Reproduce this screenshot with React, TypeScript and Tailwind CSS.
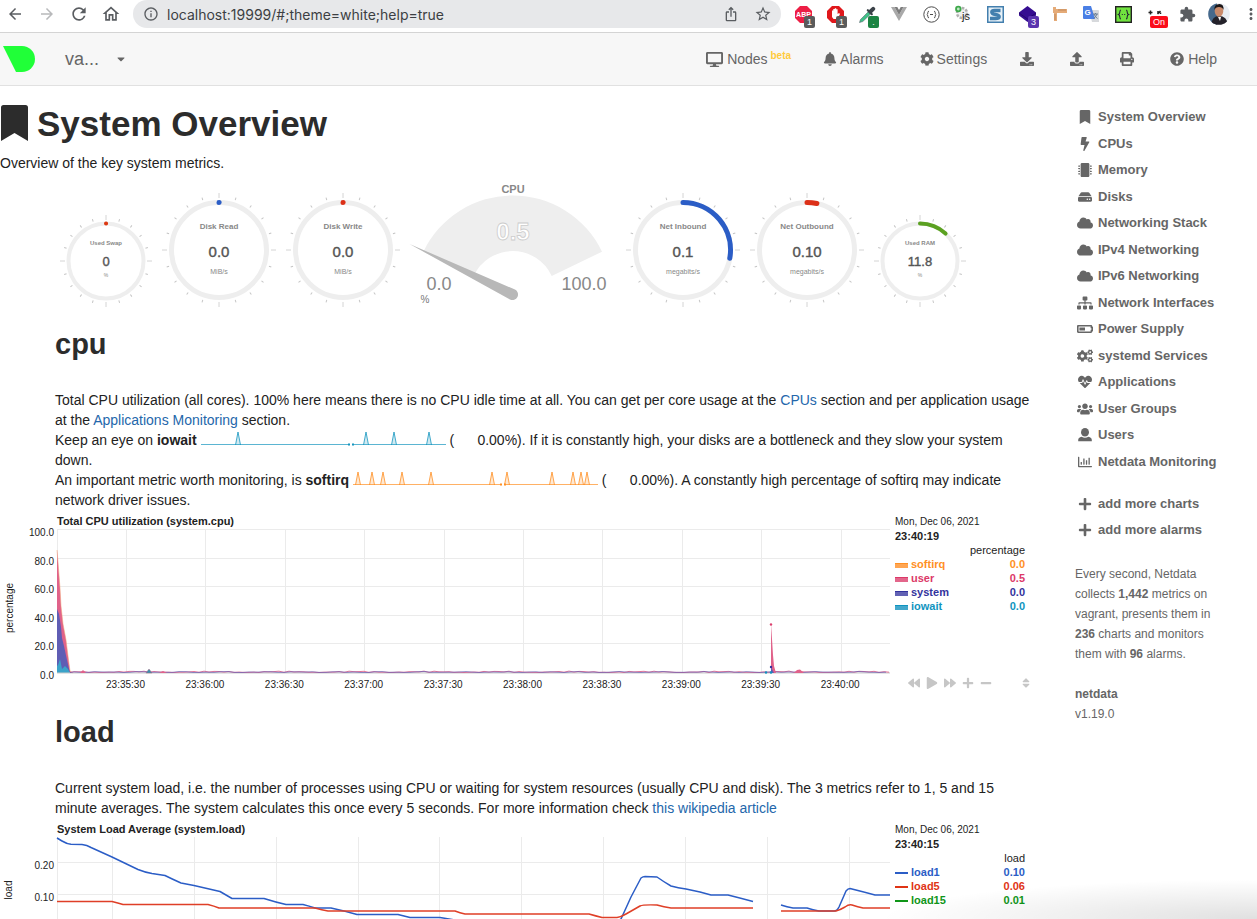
import React from "react";
import {
  FaBolt, FaMicrochip, FaHdd, FaCloud, FaSitemap, FaBatteryHalf, FaCogs, FaHeartbeat, FaUsers,
  FaRegChartBar, FaPlus, FaMinus, FaBookmark, FaDesktop, FaBell, FaCog, FaDownload, FaUpload, FaPrint,
  FaQuestionCircle, FaBackward, FaPlay, FaForward, FaSort, FaCaretDown,
} from "react-icons/fa";
import {
  MdArrowBack, MdArrowForward, MdRefresh, MdOutlineHome, MdInfoOutline, MdIosShare, MdStarOutline, MdMoreVert, MdExtension,
} from "react-icons/md";

function UserIcon() {
  return (
    <svg viewBox="0 0 14 14" width="14" height="14" fill="currentColor">
      <ellipse cx="7" cy="4.300" rx="4" ry="4.300" />
      <path d="M3.600 8.800Q7 10.800 10.400 8.800Q13.800 9.600 13.800 12V13.200H0.200V12Q0.200 9.600 3.600 8.800Z" />
    </svg>
  );
}

function Badge({ children, color }: { children: React.ReactNode; color: string }) {
  return (
    <span className={`absolute top-4 left-[17px] flex h-3 min-w-[11px] items-center justify-center rounded-xs px-px text-[9px] leading-3 text-white ${color}`}>
      {children}
    </span>
  );
}

function Ext({ label, children }: { label: string; children: React.ReactNode }) {
  return (
    <button aria-label={label} className="relative flex h-7 w-8 shrink-0 items-center justify-center">
      {children}
    </button>
  );
}

function BrowserBar() {
  return (
    <div className="flex h-[33px] shrink-0 items-start border-b border-[#d4d4d4] bg-white pl-[6px] text-[#5a5d61]">
      <div className="flex h-7 w-[127px] items-center gap-3.5 text-[18px]">
        <button aria-label="Back"><MdArrowBack /></button>
        <button aria-label="Forward" className="text-[#b8b9bb]"><MdArrowForward /></button>
        <button aria-label="Reload"><MdRefresh className="size-5 -m-px" /></button>
        <button aria-label="Home"><MdOutlineHome className="size-5 -m-px" /></button>
      </div>
      <div className="flex h-7 flex-1 items-center rounded-full bg-[#e7e8ea] pr-[9px] pl-[10px]">
        <MdInfoOutline className="size-4" />
        <input
          aria-label="Address"
          className="ml-2 min-w-0 flex-1 bg-transparent font-['Inter',sans-serif] text-[14px] text-[#3c3f43] outline-none"
          defaultValue="localhost:19999/#;theme=white;help=true"
        />
        <button aria-label="Share"><MdIosShare className="size-4" /></button>
        <button aria-label="Bookmark this page" className="ml-[15px]"><MdStarOutline className="size-[18px]" /></button>
      </div>
      <div className="ml-[6px] flex">
        <Ext label="Adblock Plus">
          <svg width="17" height="17" viewBox="0 0 17 17">
            <path d="M5 0H12L17 5V12L12 17H5L0 12V5Z" fill="#ed1e45" />
            <text x="8.500" y="11" fontSize="7" fontWeight="700" textAnchor="middle" fill="#fff">ABP</text>
          </svg>
          <Badge color="bg-[#5b5b5b]">1</Badge>
        </Ext>
        <Ext label="AdBlock">
          <svg width="17" height="17" viewBox="0 0 17 17">
            <path d="M5 0H12L17 5V12L12 17H5L0 12V5Z" fill="#e0181c" />
            <path d="M5 8V4.500H6.300V3H7.800V2.200H9.200V3.200H10.600V8L12 7L13 8L10.500 13H6.500L5 11Z" fill="#fff" />
          </svg>
          <Badge color="bg-[#5b5b5b]">1</Badge>
        </Ext>
        <Ext label="Color picker">
          <svg width="17" height="17" viewBox="0 0 17 17">
            <path d="M0.500 16.500L1.500 13.500L9.500 5.500L11.800 7.800L3.800 15.500Z" fill="#3fc187" stroke="#5b6670" strokeWidth="0.600" />
            <path d="M8.800 4.200L12.800 8.200" stroke="#3b4248" strokeWidth="2.200" strokeLinecap="round" />
            <path d="M11.500 5.500L14.200 2.800" stroke="#3b4248" strokeWidth="4" strokeLinecap="round" />
          </svg>
          <Badge color="bg-[#1c8443]">.</Badge>
        </Ext>
        <Ext label="Vue devtools">
          <svg width="16" height="14" viewBox="0 0 16 14">
            <path d="M0 0H3.500L8 8L12.500 0H16L8 14Z" fill="#a9a9a9" />
            <path d="M3.500 0H6.300L8 3L9.700 0H12.500L8 8Z" fill="#7d7d7d" />
          </svg>
        </Ext>
        <Ext label="JSON formatter">
          <svg width="17" height="17" viewBox="0 0 17 17" fill="none" stroke="#4c4c4c">
            <circle cx="8.500" cy="8.500" r="7.700" />
            <path d="M6 5.200Q4.800 5.200 4.800 6.700T4 8.500Q4.800 8.700 4.800 10.300T6 11.800M11 5.200Q12.200 5.200 12.200 6.700T13 8.500Q12.200 8.700 12.200 10.300T11 11.800M7 8.500H10" />
          </svg>
        </Ext>
        <Ext label="JS toggle">
          <svg width="18" height="19" viewBox="0 0 18 19">
            <circle cx="8" cy="8" r="5" fill="#f1f1f1" stroke="#b0b0b0" strokeWidth="2.500" strokeDasharray="2.500 1.300" />
            <circle cx="4.300" cy="4" r="3.200" fill="#3ea84b" />
            <circle cx="4.300" cy="4" r="1.400" fill="#bfe8c3" />
            <text x="8" y="15" fontSize="11" fill="#222">js</text>
          </svg>
        </Ext>
        <Ext label="Stylus">
          <svg width="17" height="17" viewBox="0 0 17 17">
            <rect x="0.750" y="0.750" width="15.500" height="15.500" fill="#e7f1f7" stroke="#437fae" strokeWidth="1.500" />
            <path d="M13.500 4.500H7.500Q4.500 4.500 4.800 6.300Q5 8 8.500 8.500Q12.500 9 12.200 10.800Q12 12.500 8.500 12.500H3" fill="none" stroke="#437fae" strokeWidth="3.400" />
          </svg>
        </Ext>
        <Ext label="Layers">
          <svg width="17" height="17" viewBox="0 0 17 17">
            <path d="M8.500 0L17 6.500V9.500L8.500 16L0 9.500V6.500Z" fill="#360d91" />
            <path d="M0 7L8.500 13L17 7" fill="none" stroke="#25076b" />
          </svg>
          <Badge color="bg-[#5a34ae]">3</Badge>
        </Ext>
        <Ext label="Ruler">
          <svg width="15" height="16" viewBox="0 0 15 16">
            <path d="M1 1H4V3H15V7H5V15H2V7H1Z" fill="#e5ab78" />
            <path d="M7 3V5M9 3V5M11 3V5M13 3V5M2 9H4M2 11H4M2 13H4" stroke="#9e6a3e" strokeWidth="0.500" />
          </svg>
        </Ext>
        <Ext label="Translate">
          <svg width="16" height="17" viewBox="0 0 16 17">
            <path d="M6 4H15Q16 4 16 5V16H9Z" fill="#d7d9dc" />
            <path d="M1 0H8L12 13H1Q0 13 0 12V1Q0 0 1 0Z" fill="#4a7fe5" />
            <text x="1.500" y="9" fontSize="8" fontWeight="700" fill="#fff">G</text>
            <path d="M10 8H15M12.500 7V8M11 8Q12 11 14.500 12.500M14 8Q13 11 10.500 12.500" stroke="#63778f" strokeWidth="0.900" fill="none" />
          </svg>
        </Ext>
        <Ext label="JSON viewer">
          <svg width="17" height="17" viewBox="0 0 17 17">
            <rect x="0.700" y="0.700" width="15.600" height="15.600" fill="#71e33f" stroke="#222" strokeWidth="1.400" />
            <path d="M6 4Q4.800 4 4.800 6T3.500 8.500Q4.800 9 4.800 11T6 13M11 4Q12.200 4 12.200 6T13.500 8.500Q12.200 9 12.200 11T11 13M6.800 8.500H7.800M9.200 8.500H10.200" fill="none" stroke="#223" strokeWidth="1.100" />
          </svg>
        </Ext>
        <Ext label="Extension on">
          <svg width="15" height="16" viewBox="0 0 15 16" fill="none" stroke="#222" strokeWidth="1.500">
            <path d="M2.500 4.500V8.500M0.500 6.500H4.500M9.500 8L12.500 5M10 5V7M12.500 6.500V8" />
          </svg>
          <span className="absolute top-4 left-[11px] rounded-xs bg-[#fb0d1b] px-[3px] text-[9px] leading-3 text-white">On</span>
        </Ext>
        <Ext label="Extensions"><MdExtension className="size-[17px]" /></Ext>
        <Ext label="Profile">
          <svg width="22" height="22" viewBox="0 0 22 22">
            <defs><clipPath id="avatar"><circle cx="11" cy="11" r="10.800" /></clipPath></defs>
            <g clipPath="url(#avatar)">
              <rect width="22" height="22" fill="#e8edf3" />
              <path d="M0 0H9V22H0Z" fill="#46698c" />
              <path d="M3 22Q4 13 11 13Q19 13 20 22Z" fill="#24222a" />
              <ellipse cx="11" cy="8" rx="4.300" ry="5.800" fill="#c98a6b" />
              <path d="M6.300 7Q6 1 11.500 1Q16 1 15.600 7Q14.500 4 11 4Q7.500 4 6.300 7Z" fill="#1c1718" />
              <path d="M10 14L12 18L13 14Z" fill="#fff" />
            </g>
          </svg>
        </Ext>
        <button aria-label="Menu" className="flex h-7 w-[22px] items-center justify-end text-lg"><MdMoreVert className="-mr-[3px] shrink-0" /></button>
      </div>
    </div>
  );
}

function NavBar() {
  return (
    <nav className="flex h-[53px] shrink-0 items-center border-b border-[#e1e1e1] bg-[#f7f7f7] pr-10 text-[14px] text-[#666]">
      <a href="#home" aria-label="Netdata" className="pl-[3px]">
        <svg width="32" height="26" viewBox="0 0 32 26"><path d="M0 0H19A13 13 0 0 1 19 26H13Z" fill="#20ff38" /></svg>
      </a>
      <button className="ml-[30px] flex items-center text-[18px]">
        va...<FaCaretDown className="ml-4 size-3" />
      </button>
      <div className="ml-auto flex items-center gap-9">
        <a href="#nodes" className="-mr-1 flex items-center gap-1">
          <FaDesktop className="size-[17px]" />
          <span>Nodes <sup className="-ml-px text-[10px] font-bold text-[#ffcb3d]">beta</sup></span>
        </a>
        <a href="#alarms" className="flex items-center gap-[3px]"><FaBell className="size-3.5" />Alarms</a>
        <a href="#settings" className="-mr-[3px] flex items-center gap-[3px]"><FaCog className="size-3.5" />Settings</a>
        <button aria-label="Import"><FaDownload className="size-3.5" /></button>
        <button aria-label="Export"><FaUpload className="size-3.5" /></button>
        <button aria-label="Print"><FaPrint className="size-3.5" /></button>
        <a href="#help" className="flex items-center gap-1"><FaQuestionCircle className="size-3.5" />Help</a>
      </div>
    </nav>
  );
}

type GaugeProps = { title: string; value: string; unit: string; color: string; sweep: number; small?: boolean };

function Gauge({ title, value, unit, color, sweep, small }: GaugeProps) {
  const c = small ? 46 : 57;
  const r = small ? 37.5 : 47.5;
  const w = small ? 4 : 5;
  const end = (sweep * Math.PI) / 180;
  const ticks = Array.from({ length: 20 }, (_, i) => i);
  return (
    <svg className="shrink-0" width={c * 2} height={c * 2} viewBox={`0 0 ${c * 2} ${c * 2}`}>
      {ticks.map((i) => {
        const major = i % 5 === 0;
        const a = i * 18;
        return (
          <line key={i} x1={c} x2={c} y1={major ? 0 : 2} y2={major ? 5 : 4.5} stroke={major ? "#d4d4d4" : "#c4c4c4"} strokeWidth="1" transform={`rotate(${a} ${c} ${c})`} />
        );
      })}
      <circle cx={c} cy={c} r={r} fill="none" stroke="#eee" strokeWidth={w} />
      <path
        d={`M${c} ${c - r}A${r} ${r} 0 0 1 ${c + r * Math.sin(end)} ${c - r * Math.cos(end)}`}
        fill="none" stroke={color} strokeWidth={w} strokeLinecap="round"
      />
      <text x={c} y={small ? 30 : 36} textAnchor="middle" fontSize={small ? 6 : 8} fontWeight="700" fill="#888">{title}</text>
      <text x={c} y={small ? 51 : 64} textAnchor="middle" fontSize={small ? 13 : 15} fill="#555" stroke="#555" strokeWidth="0.400">{value}</text>
      <text x={c} y={small ? 62 : 81} textAnchor="middle" fontSize={small ? 5 : 7} fill="#888">{unit}</text>
    </svg>
  );
}

function CpuGauge() {
  return (
    <svg className="shrink-0 overflow-visible" width="206" height="125" viewBox="0 0 206 125">
      <path d="M13.400 69.700A99 99 0 0 1 192 69.700L141.700 94A43 43 0 0 0 63.700 94Z" fill="#eee" />
      <path d="M-0.500 62L105 107.600A5.500 5.500 0 1 1 100 117.500Z" fill="#b8b8b8" />
      <text x="103" y="11" textAnchor="middle" fontSize="11" fontWeight="700" fill="#888">CPU</text>
      <text x="103" y="58" textAnchor="middle" fontSize="24" fontWeight="700" fill="#fff" stroke="#ccc" strokeWidth="0.800">0.5</text>
      <text x="29" y="108" textAnchor="middle" fontSize="18" fill="#888">0.0</text>
      <text x="174" y="108" textAnchor="middle" fontSize="18" fill="#888">100.0</text>
      <text x="15" y="121" textAnchor="middle" fontSize="10" fill="#777">%</text>
    </svg>
  );
}

function spikes(peaks: number[], top: number) {
  return peaks.map((p) => `M${p - 2.5} 14L${p} ${top}L${p + 2.5} 14`).join("");
}

function Spark({ color, peaks, end, gap }: { color: string; peaks: number[]; end: number; gap: number }) {
  return (
    <svg className="inline-block align-text-bottom" width={end} height="17" viewBox={`0 0 ${end} 17`}>
      <path d={spikes(peaks, 1)} fill={color} fillOpacity="0.200" stroke={color} strokeOpacity="0.800" />
      <path d={`M0 13.500H${gap}M${gap + 4} 13.500H${end}`} stroke={color} strokeOpacity="0.700" />
      <path d={`M${gap - 1} 13.500h2M${gap + 3} 13.500h2`} stroke={color} strokeWidth="2" />
    </svg>
  );
}

const cpuTimes = ["23:35:30", "23:36:00", "23:36:30", "23:37:00", "23:37:30", "23:38:00", "23:38:30", "23:39:00", "23:39:30", "23:40:00"];
const cpuLevels = [
  { label: "100.0", y: 1.5 }, { label: "80.0", y: 30.5 }, { label: "60.0", y: 58.5 },
  { label: "40.0", y: 87.5 }, { label: "20.0", y: 115.5 }, { label: "0.0", y: 144.5 },
];

function noise(step: number, phase: number, height: number) {
  let d = "M70 144.500";
  for (let x = 74; x <= 890; x += step) {
    const v = Math.abs(Math.sin(x * phase) * Math.cos(x * 0.37));
    d += `L${x} ${(144.5 - v * height).toFixed(1)}`;
  }
  return d;
}

function CpuChart() {
  return (
    <svg className="block w-full" viewBox="0 0 895 166">
      {cpuLevels.map((l) => (
        <g key={l.label}>
          <path d={`M57 ${l.y}H890`} stroke="#ebebeb" />
          <text x="54" y={l.y + 6} textAnchor="end" fontSize="10" fill="#222">{l.label}</text>
        </g>
      ))}
      <path d="M57.500 1V145" stroke="#ebebeb" />
      {cpuTimes.map((t, i) => (
        <g key={t}>
          <path d={`M${Math.round(126 + i * 79.4) + 0.5} 1V145`} stroke="#ebebeb" />
          <text x={125.5 + i * 79.4} y="160" textAnchor="middle" fontSize="10" fill="#222">{t}</text>
        </g>
      ))}
      <text transform="translate(13 80) rotate(-90)" textAnchor="middle" fontSize="10" fill="#222">percentage</text>
      <path d="M57 22L58 34L60 60L61 78L63 96L66 112L68 128L70 143L73 145H57Z" fill="#e0628a" />
      <path d="M57 22L58 34L60 60L61 78L63 96L66 112L68 128L70 143L73 145" fill="none" stroke="#f2a273" strokeWidth="0.500" />
      <path d="M57 81L59 86L61 99L62 110L64 118L67 132L70 145H57Z" fill="#5f5db4" />
      <path d="M57 138L58 137L60 131L62 141L65 138L68 141L70 145H57Z" fill="#3ba3c9" />
      <path d="M57 145H890" stroke="#ccc" />
      <path d={noise(5, 1.3, 1.4)} fill="none" stroke="#e0628a" strokeWidth="0.900" />
      <path d={noise(7, 2.1, 1)} fill="none" stroke="#5f5db4" strokeWidth="0.700" />
      <path d="M80 145L83 142L86 145ZM159 145L163 143L167 145ZM794 145L797 142L800 141.500L804 145Z" fill="#e0628a" />
      <path d="M146 145L149 141L152 145Z" fill="#3a8fb0" stroke="#a56a80" strokeWidth="0.500" />
      <path d="M771 96L772 111L773 127L774 138L776 145H771Z" fill="#e0628a" />
      <path d="M771 139L774 145H771Z" fill="#5f5db4" />
      <circle cx="771" cy="96.500" r="1.200" fill="#dc3f6e" />
      <circle cx="771" cy="139" r="1.200" fill="#33339d" />
      <circle cx="766" cy="144.500" r="1.200" fill="#0f8fc0" />
      <circle cx="771" cy="144.500" r="1.200" fill="#0f8fc0" />
    </svg>
  );
}

function LoadChart() {
  const xs = [112, 194, 276, 358, 439, 521, 603, 685, 767, 849];
  return (
    <svg className="block w-full" viewBox="0 0 895 110">
      {xs.map((x) => <path key={x} d={`M${x + 0.5} 1V110`} stroke="#ebebeb" />)}
      <path d="M57.500 1V110M57 26.500H890M57 58.500H890M57 90.500H890" stroke="#ebebeb" />
      <text x="54" y="33" textAnchor="end" fontSize="10" fill="#222">0.20</text>
      <text x="54" y="65" textAnchor="end" fontSize="10" fill="#222">0.10</text>
      <text transform="translate(12 54) rotate(-90)" textAnchor="middle" fontSize="10" fill="#222">load</text>
      <g fill="none" strokeWidth="1.500" strokeLinejoin="round">
        <path d="M57 2L62 5Q67 8 71 8.300L82 8.600Q87 9 91 11.500L112 21L138 33.500Q144 36 152 37.500L165 39.500Q172 43 181 47L194 49.500L220 55.500Q226 59 232 62.500H264Q275 66 286 68.500H303Q309 70 315 72H331Q345 75 357 78.500H398Q404 80 410 81.500H440L455 84L610 90L621 83L631 61L641 42Q643 40.500 645 40.500L657 41Q664 46 671 50Q678 52 686 53L700 56L711 59H728Q740 62 753 65.500M781 69Q787 71 793 72H807Q813 74 819 75H834Q837 75 839 71L846 55Q848 52.500 850 52.500Q864 56 875 59H890" stroke="#2b5dc6" />
        <path d="M57 65.500H112Q118 67 123 68.500H208Q214 70 219 72H315Q322 74 328 75H455Q460 77 465 78H589Q596 80 602 81.500H617Q621 81 626 78L640 70Q643 68.500 657 69Q664 71 671 72H753M781 75H836Q840 74 845 71Q849 68 852 69Q858 71 863 72H890" stroke="#df3f27" />
      </g>
    </svg>
  );
}

type Row = { name: string; value: string; text: string; swatch: string };

function Legend({ time, unit, rows }: { time: string; unit: string; rows: Row[] }) {
  return (
    <div className="text-[11px] leading-[14px] text-[#222]">
      <div className="text-[10px] leading-[14px]">Mon, Dec 06, 2021</div>
      <div className="font-bold">{time}</div>
      <table className="w-[130px]">
        <thead><tr><th colSpan={2} className="p-0 text-right font-normal">{unit}</th></tr></thead>
        <tbody>
          {rows.map((r) => (
            <tr key={r.name} className={`font-bold ${r.text}`}>
              <td className="p-0"><span className={`mr-[3px] inline-block w-[13px] ${r.swatch}`} />{r.name}</td>
              <td className="p-0 text-right">{r.value}</td>
            </tr>
          ))}
        </tbody>
      </table>
    </div>
  );
}

const cpuRows: Row[] = [
  { name: "softirq", value: "0.0", text: "text-[#ff9024]", swatch: "h-[5px] border-t border-[#ff9024] bg-[#ffa653]" },
  { name: "user", value: "0.5", text: "text-[#dc3968]", swatch: "h-[5px] border-t border-[#dc3968] bg-[#e3668b]" },
  { name: "system", value: "0.0", text: "text-[#33339d]", swatch: "h-[5px] border-t border-[#33339d] bg-[#6262b4]" },
  { name: "iowait", value: "0.0", text: "text-[#0f94c0]", swatch: "h-[5px] border-t border-[#0f94c0] bg-[#43a8cc]" },
];
const loadRows: Row[] = [
  { name: "load1", value: "0.10", text: "text-[#2b5dc6]", swatch: "h-0.5 align-middle bg-[#2b5dc6]" },
  { name: "load5", value: "0.06", text: "text-[#df3415]", swatch: "h-0.5 align-middle bg-[#df3415]" },
  { name: "load15", value: "0.01", text: "text-[#109618]", swatch: "h-0.5 align-middle bg-[#109618]" },
];

const menu = [
  { label: "System Overview", icon: <FaBookmark /> },
  { label: "CPUs", icon: <FaBolt /> },
  { label: "Memory", icon: <FaMicrochip /> },
  { label: "Disks", icon: <FaHdd /> },
  { label: "Networking Stack", icon: <FaCloud className="size-4" /> },
  { label: "IPv4 Networking", icon: <FaCloud className="size-4" /> },
  { label: "IPv6 Networking", icon: <FaCloud className="size-4" /> },
  { label: "Network Interfaces", icon: <FaSitemap className="size-4" /> },
  { label: "Power Supply", icon: <FaBatteryHalf className="size-4" /> },
  { label: "systemd Services", icon: <FaCogs className="size-4" /> },
  { label: "Applications", icon: <FaHeartbeat /> },
  { label: "User Groups", icon: <FaUsers className="size-4" /> },
  { label: "Users", icon: <UserIcon /> },
  { label: "Netdata Monitoring", icon: <FaRegChartBar /> },
];

function MenuItem({ label, icon }: { label: string; icon: React.ReactNode }) {
  return (
    <li>
      <a href="#section" className="flex items-center text-[13px] leading-[18px] font-bold whitespace-nowrap">
        <span className="mr-[3px] flex w-5 shrink-0 justify-center text-[14px]">{icon}</span>{label}
      </a>
    </li>
  );
}

function Sidebar() {
  return (
    <aside className="w-[182px] shrink-0 pt-[22px] text-[#666]">
      <ul className="flex h-[363px] flex-col justify-between">
        {menu.map((m) => <MenuItem key={m.label} {...m} />)}
      </ul>
      <ul className="mt-6 flex flex-col gap-2">
        <MenuItem label="add more charts" icon={<FaPlus />} />
        <MenuItem label="add more alarms" icon={<FaPlus />} />
      </ul>
      <p className="mt-[25px] w-[145px] text-[12px] leading-5">
        Every second, Netdata collects <b>1,442</b> metrics on vagrant, presents them in <b>236</b> charts and monitors them with <b>96</b> alarms.
      </p>
      <p className="mt-5 text-[12px] leading-5"><b>netdata</b><br />v1.19.0</p>
    </aside>
  );
}

export default function App() {
  return (
    <div className="relative flex h-screen flex-col overflow-hidden bg-white font-['Liberation_Sans',Arial,sans-serif] text-[#222]">
      <BrowserBar />
      <NavBar />
      <div className="flex min-h-0 flex-1 overflow-hidden">
        <main className="min-w-0 flex-1">
          <h1 className="flex items-center pt-[18px] text-[35px] leading-10 font-bold text-[#2c2c2c]">
            <svg className="mr-[9px] ml-px" width="27" height="38" viewBox="0 0 27 38" fill="currentColor">
              <path d="M2.500 0H24.500Q27 0 27 2.500V36L13.500 28L0 36V2.500Q0 0 2.500 0Z" />
            </svg>
            System Overview
          </h1>
          <p className="mt-[9px] text-[14px] leading-5">Overview of the key system metrics.</p>
          <div className="mt-[9px] flex items-end gap-[10px] pl-[60px]">
            <Gauge small title="Used Swap" value="0" unit="%" color="#dc3912" sweep={0.2} />
            <Gauge title="Disk Read" value="0.0" unit="MiB/s" color="#2b5dc6" sweep={0.2} />
            <Gauge title="Disk Write" value="0.0" unit="MiB/s" color="#dc3018" sweep={0.2} />
            <CpuGauge />
            <Gauge title="Net Inbound" value="0.1" unit="megabits/s" color="#2b5dc6" sweep={100} />
            <Gauge title="Net Outbound" value="0.10" unit="megabits/s" color="#dc3018" sweep={12} />
            <Gauge small title="Used RAM" value="11.8" unit="%" color="#5ba121" sweep={43} />
          </div>
          <h2 className="mt-5 pl-[55px] text-[29px] leading-[34px] font-bold text-[#2c2c2c]">cpu</h2>
          <p className="mt-[29px] pr-[38px] pl-[55px] text-[14px] leading-5">
            Total CPU utilization (all cores). 100% here means there is no CPU idle time at all. You can get per core usage at the <a href="#cpus" className="text-[#2467ab]">CPUs</a> section and per application usage at the <a href="#apps" className="text-[#2467ab]">Applications Monitoring</a> section.<br />
            Keep an eye on <b>iowait</b> <Spark color="#1696bf" peaks={[37, 165, 193, 228]} gap={148} end={245} /> (<span className="inline-block w-[63px] text-right">0.00%</span>). If it is constantly high, your disks are a bottleneck and they slow your system down.<br />
            An important metric worth monitoring, is <b>softirq</b> <Spark color="#ff9024" peaks={[5, 19, 30, 49, 78, 139, 154, 199, 220, 228, 234]} gap={148} end={245} /> (<span className="inline-block w-[63px] text-right">0.00%</span>). A constantly high percentage of softirq may indicate network driver issues.
          </p>
          <section className="mt-[5px] flex">
            <div className="min-w-0 flex-1">
              <h3 className="pl-[57px] text-[11px] leading-[13px] font-bold">Total CPU utilization (system.cpu)</h3>
              <CpuChart />
            </div>
            <div className="flex w-[180px] shrink-0 flex-col">
              <Legend time="23:40:19" unit="percentage" rows={cpuRows} />
              <div className="mt-auto mb-[5px] ml-[13px] flex items-center gap-[6px] text-[12px] text-[#c6c6c6]">
                <button aria-label="Rewind"><FaBackward /></button>
                <button aria-label="Play"><FaPlay /></button>
                <button aria-label="Forward"><FaForward /></button>
                <button aria-label="Zoom in"><FaPlus /></button>
                <button aria-label="Zoom out"><FaMinus /></button>
                <button aria-label="Resize" className="ml-5"><FaSort className="h-3 w-4" /></button>
              </div>
            </div>
          </section>
          <h2 className="mt-[21px] pl-[55px] text-[29px] leading-[34px] font-bold text-[#2c2c2c]">load</h2>
          <p className="mt-[29px] pr-[38px] pl-[55px] text-[14px] leading-5">
            Current system load, i.e. the number of processes using CPU or waiting for system resources (usually CPU and disk). The 3 metrics refer to 1, 5 and 15 minute averages. The system calculates this once every 5 seconds. For more information check <a href="#wikipedia" className="text-[#2467ab]">this wikipedia article</a>
          </p>
          <section className="mt-[5px] flex">
            <div className="min-w-0 flex-1">
              <h3 className="pl-[57px] text-[11px] leading-[13px] font-bold">System Load Average (system.load)</h3>
              <LoadChart />
            </div>
            <div className="w-[180px] shrink-0">
              <Legend time="23:40:15" unit="load" rows={loadRows} />
            </div>
          </section>
        </main>
        <Sidebar />
      </div>
      <div className="pointer-events-none absolute right-0 bottom-0 h-10 w-[380px] bg-[radial-gradient(ellipse_at_bottom_right,rgba(0,0,0,0.12),transparent_70%)]" />
    </div>
  );
}
